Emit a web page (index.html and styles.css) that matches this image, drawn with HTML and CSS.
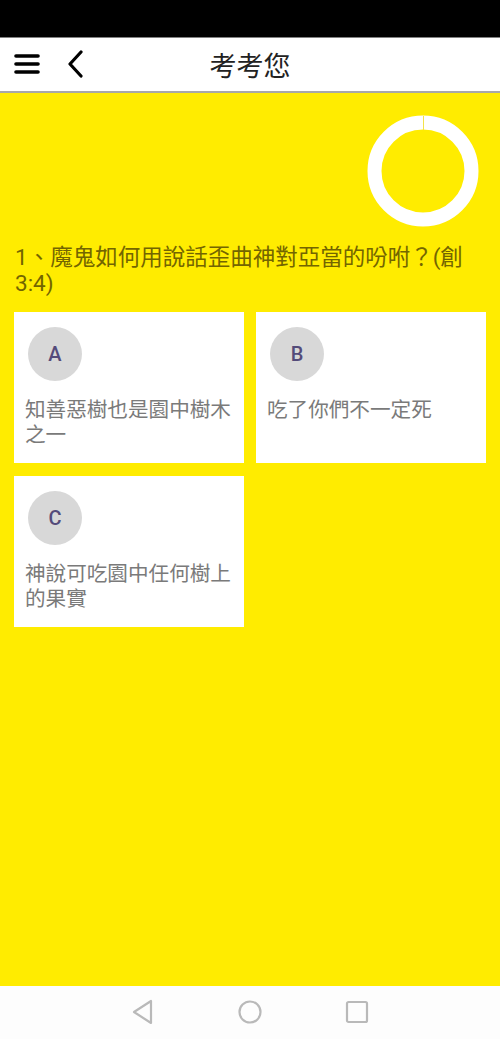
FILE: index.html
```html
<!DOCTYPE html>
<html lang="zh-Hant">
<head>
<meta charset="utf-8">
<link rel="stylesheet" href="styles.css">
</head>
<body>
<div class="app">
  <div class="status"></div>
  <header class="topbar">
    <div class="left-icons">
      <svg class="icon-menu" width="26" height="22" viewBox="0 0 26 22"><g stroke="#000" stroke-width="3.6" stroke-linecap="round"><line x1="2" y1="3" x2="24" y2="3"/><line x1="2" y1="11" x2="24" y2="11"/><line x1="2" y1="19" x2="24" y2="19"/></g></svg>
      <svg class="icon-back" width="18" height="28" viewBox="0 0 18 28"><polyline points="14,2 3,14 14,26" fill="none" stroke="#000" stroke-width="3.2" stroke-linecap="round" stroke-linejoin="round"/></svg>
    </div>
    <h1 class="title">考考您</h1>
  </header>
  <main class="content">
    <div class="timer-row">
      <svg class="timer" width="112" height="112" viewBox="0 0 112 112"><circle cx="56" cy="56" r="48.5" fill="none" stroke="#fff" stroke-width="14"/><line x1="56.5" y1="1" x2="56.5" y2="15" stroke="#f3e24a" stroke-width="1"/></svg>
    </div>
    <p class="question">1、魔鬼如何用說話歪曲神對亞當的吩咐？(創3:4)</p>
    <div class="answers">
      <div class="card">
        <div class="badge">A</div>
        <div class="answer">知善惡樹也是園中樹木之一</div>
      </div>
      <div class="card">
        <div class="badge">B</div>
        <div class="answer">吃了你們不一定死</div>
      </div>
      <div class="card">
        <div class="badge">C</div>
        <div class="answer">神說可吃園中任何樹上的果實</div>
      </div>
    </div>
  </main>
  <nav class="navbar">
    <svg width="24" height="26" viewBox="0 0 24 26"><path d="M20 2 L20 24 L3 13 Z" fill="none" stroke="#b9b9b9" stroke-width="2.2" stroke-linejoin="round"/></svg>
    <svg width="26" height="26" viewBox="0 0 26 26"><circle cx="13" cy="13" r="10.5" fill="none" stroke="#b9b9b9" stroke-width="2.2"/></svg>
    <svg width="24" height="24" viewBox="0 0 24 24"><rect x="2" y="2" width="20" height="20" rx="1.5" fill="none" stroke="#b9b9b9" stroke-width="2.2"/></svg>
  </nav>
</div>
</body>
</html>
```
FILE: styles.css
```css
* { box-sizing: border-box; }
html, body { margin: 0; padding: 0; }
body {
  width: 500px;
  height: 1039px;
  font-family: Roboto, "Noto Sans CJK TC", "Noto Sans", sans-serif;
  background: #ffec00;
}
.app {
  display: flex;
  flex-direction: column;
  height: 1039px;
}
.status {
  height: 38px;
  background: #000;
  border-bottom: 1px solid #808080;
  flex: none;
}
.topbar {
  height: 55px;
  flex: none;
  background: #fff;
  border-bottom: 2px solid #a8a8a8;
  display: flex;
  align-items: center;
  position: relative;
}
.left-icons {
  display: flex;
  align-items: center;
  padding-left: 14px;
  gap: 27px;
  position: relative;
  z-index: 1;
}
.icon-menu { margin-top: -2px; }
.icon-back { margin-top: -2px; }
.title {
  position: absolute;
  left: 0;
  right: 0;
  top: 0;
  bottom: 0;
  margin: 0;
  display: flex;
  align-items: center;
  justify-content: center;
  font-size: 27px;
  font-weight: 400;
  color: #222;
  padding-bottom: 0;
}
.content {
  flex: 1;
  background: #ffec00;
  padding: 22px 14px 0 14px;
}
.timer-row {
  display: flex;
  justify-content: flex-end;
  padding-right: 7px;
}
.question {
  margin: 17px 0 0 1px;
  font-size: 22.5px;
  line-height: 26px;
  color: #736500;
}
.answers {
  margin-top: 16px;
  display: grid;
  grid-template-columns: 230px 230px;
  column-gap: 12px;
  row-gap: 13px;
}
.card {
  background: #fff;
  height: 151px;
  padding: 15px 10px 0 14px;
}
.badge {
  width: 54px;
  height: 54px;
  border-radius: 50%;
  background: #d8d8d8;
  display: flex;
  align-items: center;
  justify-content: center;
  font-size: 20px;
  font-weight: 500;
  color: #544b7a;
  font-family: Roboto, sans-serif;
}
.answer {
  margin-top: 17px;
  margin-left: -3px;
  font-size: 20.6px;
  line-height: 25px;
  color: #7a7a7a;
}
.navbar {
  height: 53px;
  flex: none;
  background: #fdfdfd;
  display: flex;
  align-items: center;
  justify-content: center;
  gap: 82px;
  padding-bottom: 1px;
}
```
